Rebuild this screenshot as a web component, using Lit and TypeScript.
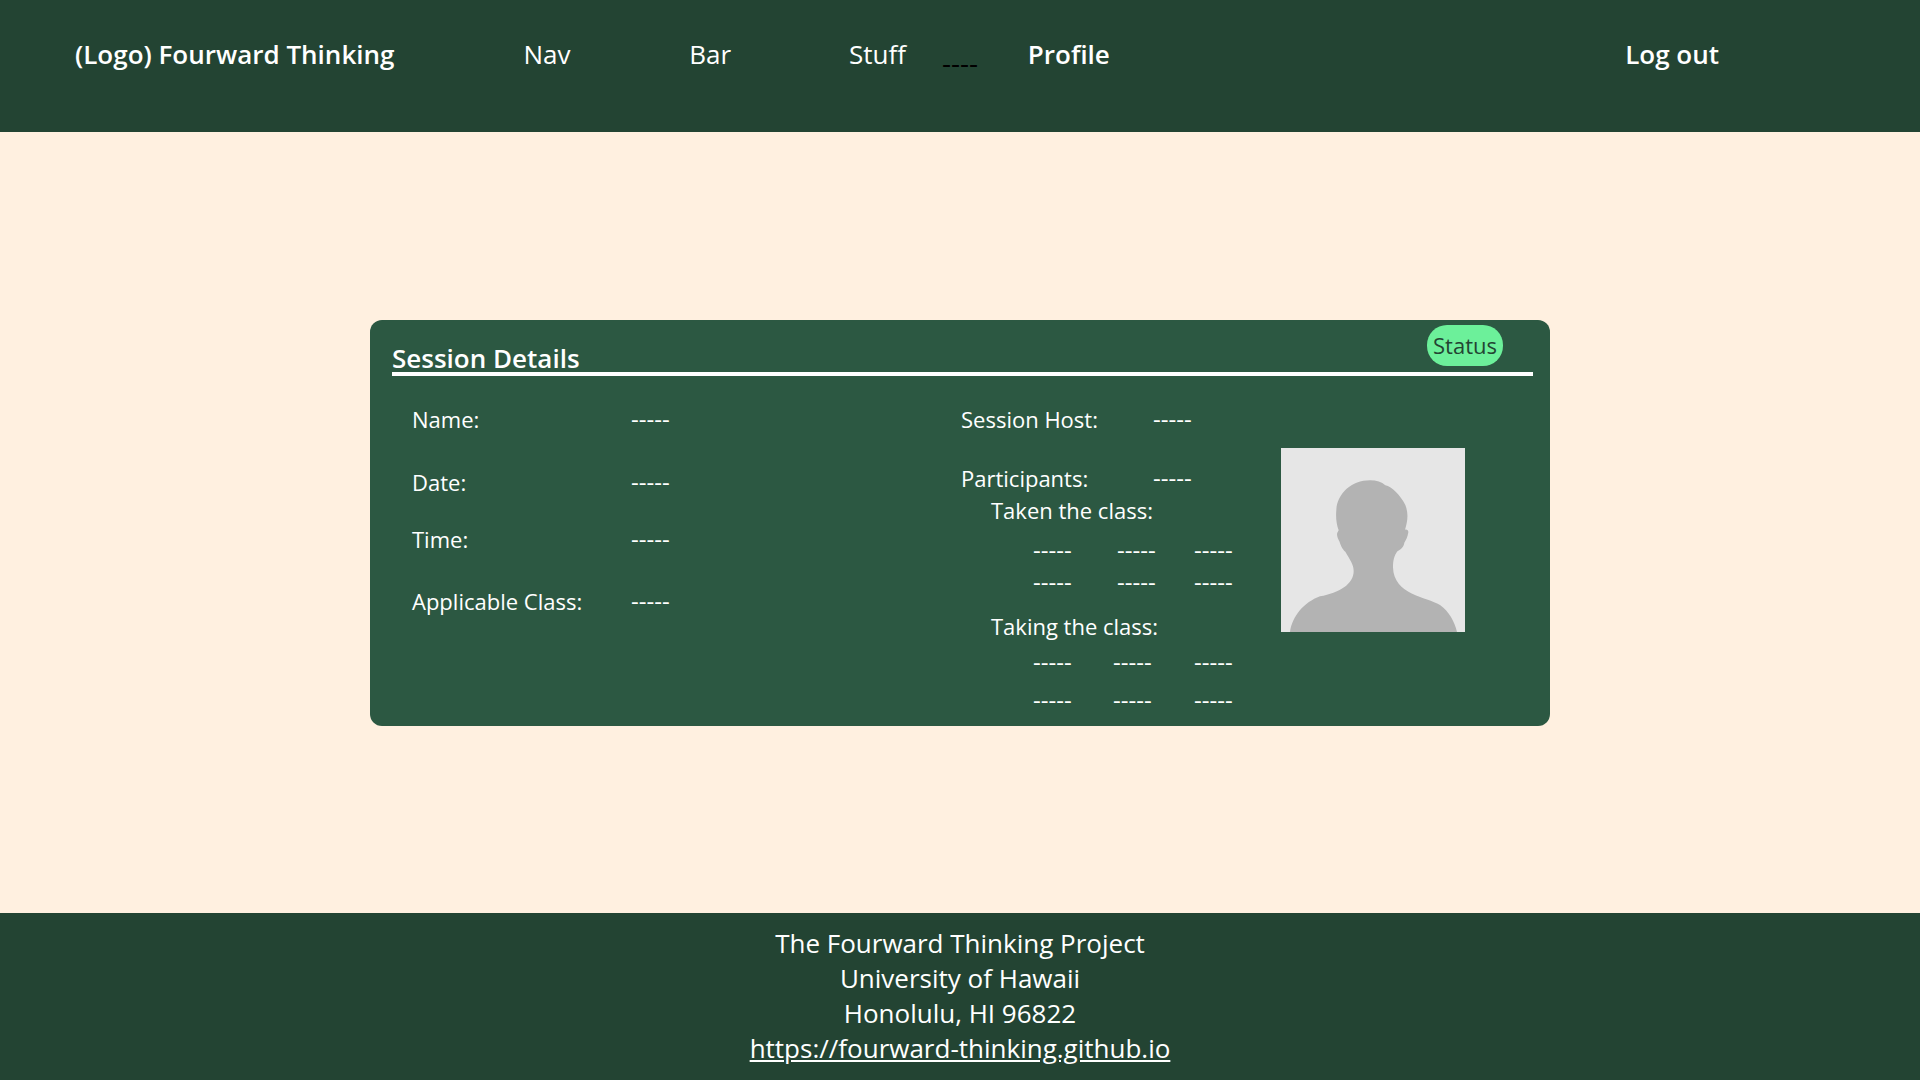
import { LitElement, html, css } from "lit";
import { customElement, property } from "lit/decorators.js";

const BLANK = "-----";

@customElement("user-avatar")
class UserAvatar extends LitElement {
  static styles = css`
    :host {
      display: block;
    }
    .picture {
      display: block;
      width: 100%;
      background: #e6e6e6;
    }
  `;

  render() {
    return html`
      <svg class="picture" viewBox="63 414 552 552" role="img" aria-label="Session host">
        <path
          fill="#b3b3b3"
          d="M90 966C97 918 132 877 180 859C238 849 281 822 281 783C281 762 269 748 256 725C246 718 240 700 239 696C234 686 229 676 232 668L236 661C229 642 227 620 229 600C232 550 275 511 330 511C350 511 365 516 376 526C396 530 421 556 436 585C446 610 443 635 435 659C441 658 445 660 445 667C443 681 438 690 433 698C431 712 422 718 413 723C402 737 399 752 399 772C401 855 500 861 540 885C566 903 584 935 591 966Z"
        />
      </svg>
    `;
  }
}

@customElement("name-grid")
class NameGrid extends LitElement {
  @property({ type: Array }) names: string[] = [];

  static styles = css`
    :host {
      display: block;
    }
    .names {
      display: grid;
      grid-template-columns: var(--name-columns, 80px 81px) auto;
      row-gap: inherit;
      margin: 0;
      padding: 0;
      list-style: none;
      font-size: 24px;
    }
  `;

  render() {
    return html`<ul class="names">
      ${this.names.map((name) => html`<li>${name}</li>`)}
    </ul>`;
  }
}

@customElement("app-root")
class AppRoot extends LitElement {
  static styles = css`
    :host {
      display: flex;
      flex-direction: column;
      min-height: 100vh;
      background: #fff0e0;
      color: #fff;
      font-family: "Open Sans", "Noto Sans", sans-serif;
      font-size: 22px;
      line-height: 28px;
    }
    a {
      color: inherit;
      text-decoration: none;
    }
    .top {
      display: grid;
      grid-template-columns: 449fr 166fr 160fr 93fr 86fr 598fr auto;
      padding: 36px 201px 60px 75px;
      background: #234433;
      font-size: 26px;
      line-height: 36px;
      white-space: nowrap;
    }
    .strong {
      font-weight: 600;
    }
    .marker {
      padding-top: 16px;
      color: #000;
      font-size: 28px;
      line-height: 20px;
    }
    .button {
      padding: 0;
      border: 0;
      background: none;
      color: inherit;
      font: inherit;
      font-weight: 600;
      cursor: pointer;
    }
    .main {
      flex: 1;
      display: flex;
      align-items: center;
      justify-content: center;
      padding: 24px;
    }
    .card {
      box-sizing: border-box;
      width: 100%;
      max-width: 1180px;
      padding: 0 17px 12px 22px;
      border-radius: 12px;
      background: #2c5842;
    }
    .head {
      display: flex;
      align-items: flex-start;
      justify-content: space-between;
      padding: 5px 30px 6px 0;
      border-bottom: 4px solid #fff;
    }
    .title {
      margin: 17px 0 -8px;
      font-size: 26px;
      line-height: 32px;
      font-weight: 600;
    }
    .status {
      padding: 6px 6px 7px;
      border-radius: 20px;
      background: #6cf09a;
      color: #234433;
    }
    .body {
      display: grid;
      grid-template-columns: 569fr 320fr 184fr 68fr;
      padding-top: 29px;
    }
    .facts {
      display: grid;
      grid-template-columns: 219px auto;
      grid-template-rows: 63px 57px 62px auto;
      align-content: start;
      margin: 0;
      padding-left: 20px;
    }
    .people {
      display: grid;
      grid-template-columns: 192px auto;
      grid-template-rows: 59px auto;
      margin: 0;
    }
    .facts dd,
    .people dd {
      margin: 0;
      font-size: 24px;
    }
    .group {
      margin: 0;
      padding: 4px 0 0 30px;
      font-size: 22px;
      font-weight: 400;
    }
    .taken,
    .taking {
      padding-left: 72px;
    }
    .taken {
      --name-columns: 84px 77px;
      row-gap: 4px;
      padding-top: 12px;
      padding-bottom: 12px;
    }
    .taking {
      row-gap: 10px;
      padding-top: 8px;
    }
    .avatar {
      margin-top: 43px;
    }
    .foot {
      padding: 13px 24px 14px;
      background: #234433;
      font-size: 26px;
      line-height: 35px;
      text-align: center;
    }
    .foot p {
      margin: 0;
    }
    .foot a {
      text-decoration: underline;
    }
  `;

  private facts = ["Name:", "Date:", "Time:", "Applicable Class:"];
  private taken = Array(6).fill(BLANK);
  private taking = Array(6).fill(BLANK);

  render() {
    return html`
      <header class="top">
        <a class="strong" href="#home">(Logo) Fourward Thinking</a>
        <a href="#nav">Nav</a>
        <a href="#bar">Bar</a>
        <a href="#stuff">Stuff</a>
        <span class="marker">----</span>
        <a class="strong" href="#profile">Profile</a>
        <button class="button" type="button">Log out</button>
      </header>
      <main class="main">
        <section class="card">
          <div class="head">
            <h1 class="title">Session Details</h1>
            <span class="status">Status</span>
          </div>
          <div class="body">
            <dl class="facts">
              ${this.facts.map((label) => html`<dt>${label}</dt><dd>${BLANK}</dd>`)}
            </dl>
            <div>
              <dl class="people">
                <dt>Session Host:</dt><dd>${BLANK}</dd>
                <dt>Participants:</dt><dd>${BLANK}</dd>
              </dl>
              <h2 class="group">Taken the class:</h2>
              <name-grid class="taken" .names=${this.taken}></name-grid>
              <h2 class="group">Taking the class:</h2>
              <name-grid class="taking" .names=${this.taking}></name-grid>
            </div>
            <user-avatar class="avatar"></user-avatar>
          </div>
        </section>
      </main>
      <footer class="foot">
        <p>The Fourward Thinking Project</p>
        <p>University of Hawaii</p>
        <p>Honolulu, HI 96822</p>
        <p><a href="https://fourward-thinking.github.io">https://fourward-thinking.github.io</a></p>
      </footer>
    `;
  }
}
